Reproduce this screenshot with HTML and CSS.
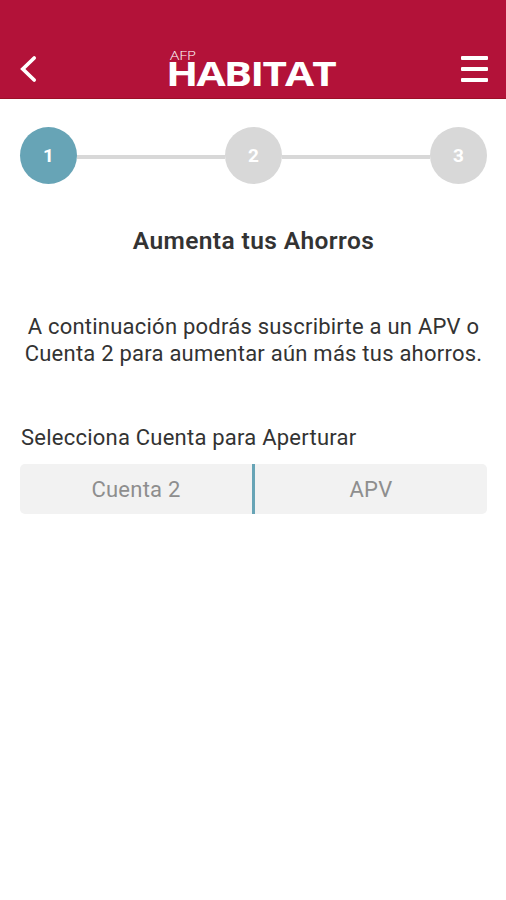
FILE: index.html
```html
<!DOCTYPE html>
<html lang="es">
<head>
	<meta charset="utf-8">
	<title>AFP Habitat</title>
	<link rel="stylesheet" href="styles.css">
</head>
<body>
	<header class="header">
		<svg class="back" width="17" height="28" viewBox="0 0 17 28">
			<path d="M14.2 3L2.8 14L14.2 25" fill="none" stroke="#fff" stroke-width="3.7" stroke-linecap="round"/>
		</svg>
		<svg class="logo" width="170" height="42" viewBox="0 0 170 42">
			<text class="logo-afp" x="2" y="11" textLength="26" lengthAdjust="spacingAndGlyphs">AFP</text>
			<text class="logo-name" x="-2" y="37" textLength="169" lengthAdjust="spacingAndGlyphs">HABITAT</text>
		</svg>
		<div class="menu">
			<span></span>
			<span></span>
			<span></span>
		</div>
	</header>

	<main class="content">
		<div class="steps">
			<div class="step active">1</div>
			<div class="line"></div>
			<div class="step">2</div>
			<div class="line"></div>
			<div class="step">3</div>
		</div>

		<h1>Aumenta tus Ahorros</h1>
		<p class="intro">A continuación podrás suscribirte a un APV o<br>Cuenta 2 para aumentar aún más tus ahorros.</p>

		<p class="label">Selecciona Cuenta para Aperturar</p>
		<div class="options">
			<button type="button">Cuenta 2</button>
			<button type="button">APV</button>
		</div>
	</main>
</body>
</html>
```

FILE: styles.css
```css
* {
	box-sizing: border-box;
}

body {
	margin: 0;
	background: #fff;
	color: #333;
	font-family: Roboto, sans-serif;
}

.header {
	display: flex;
	justify-content: space-between;
	align-items: flex-start;
	height: 99px;
	padding: 49px 18px 0 20px;
	border-bottom: 1px solid #9c1027;
	background: #b31239;
}

.back {
	margin-top: 6px;
}

.logo {
	margin-left: 7px;
	fill: #fff;
	overflow: visible;
}

.logo-afp {
	font: 300 13px "Open Sans", sans-serif;
}

.logo-name {
	font: bold 34px "Open Sans", sans-serif;
	letter-spacing: -1.5px;
}

.menu {
	display: flex;
	flex-direction: column;
	gap: 7px;
	margin-top: 7px;
}

.menu span {
	width: 27px;
	height: 4px;
	border-radius: 1px;
	background: #fff;
}

.content {
	padding: 28px 19px 0 20px;
}

.steps {
	display: flex;
	align-items: center;
}

.step {
	width: 57px;
	height: 57px;
	border-radius: 50%;
	background: #d8d8d8;
	color: #fff;
	font-size: 19px;
	font-weight: bold;
	line-height: 57px;
	text-align: center;
}

.step.active {
	background: #67a4b6;
}

.line {
	flex: 1;
	height: 4px;
	margin-top: 2px;
	background: #d8d8d8;
}

h1 {
	margin: 42px 0 0;
	font-size: 24.5px;
	font-weight: 600;
	letter-spacing: 0.4px;
	line-height: 30px;
	text-align: center;
}

.intro {
	margin: 57px -10px 0;
	font-size: 22px;
	letter-spacing: 0.23px;
	line-height: 27px;
	text-align: center;
}

.label {
	margin: 57px 0 0 1px;
	font-size: 22px;
	letter-spacing: 0.23px;
	line-height: 27px;
}

.options {
	display: flex;
	height: 50px;
	margin-top: 13px;
	border-radius: 5px;
	background: #f2f2f2;
	overflow: hidden;
}

.options button {
	flex: 1;
	padding: 0;
	border: 0;
	background: none;
	color: #8e8e8e;
	font: 22px Roboto, sans-serif;
	letter-spacing: 0.23px;
}

.options button + button {
	border-left: 3px solid #67a4b6;
}
```
